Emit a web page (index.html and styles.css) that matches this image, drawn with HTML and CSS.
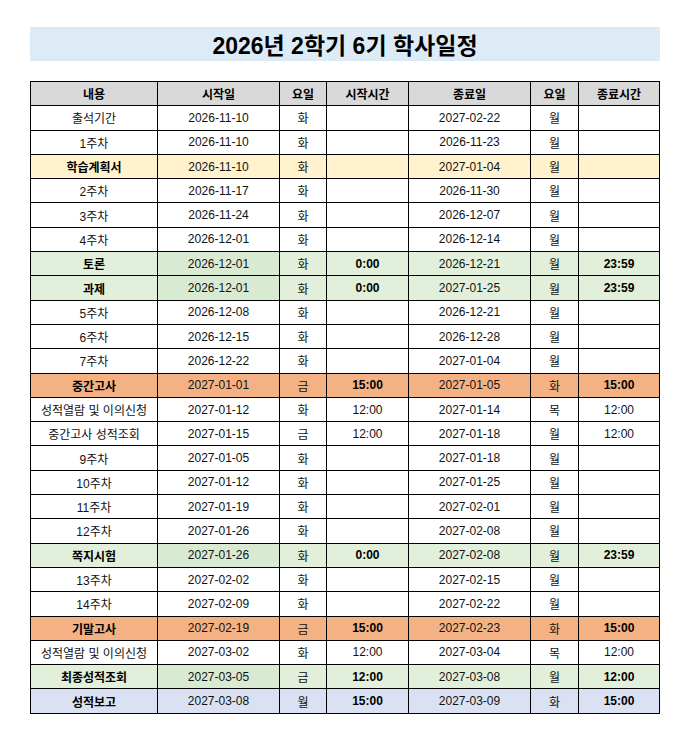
FILE: index.html
```html
<!DOCTYPE html>
<html lang="ko">
<head>
<meta charset="utf-8">
<title>2026년 2학기 6기 학사일정</title>
<link rel="stylesheet" href="styles.css">
</head>
<body>
<div class="page">
  <h1 class="title">2026년 2학기 6기 학사일정</h1>
  <div class="sheet">
    <div class="row head"><div>내용</div><div>시작일</div><div>요일</div><div>시작시간</div><div>종료일</div><div>요일</div><div>종료시간</div></div>
    <div class="row"><div>출석기간</div><div>2026-11-10</div><div>화</div><div></div><div>2027-02-22</div><div>월</div><div></div></div>
    <div class="row"><div>1주차</div><div>2026-11-10</div><div>화</div><div></div><div>2026-11-23</div><div>월</div><div></div></div>
    <div class="row yellow"><div class="b">학습계획서</div><div>2026-11-10</div><div>화</div><div></div><div>2027-01-04</div><div>월</div><div></div></div>
    <div class="row"><div>2주차</div><div>2026-11-17</div><div>화</div><div></div><div>2026-11-30</div><div>월</div><div></div></div>
    <div class="row"><div>3주차</div><div>2026-11-24</div><div>화</div><div></div><div>2026-12-07</div><div>월</div><div></div></div>
    <div class="row"><div>4주차</div><div>2026-12-01</div><div>화</div><div></div><div>2026-12-14</div><div>월</div><div></div></div>
    <div class="row green"><div class="b">토론</div><div class="dk">2026-12-01</div><div>화</div><div class="b">0:00</div><div>2026-12-21</div><div>월</div><div class="b">23:59</div></div>
    <div class="row green"><div class="b">과제</div><div class="dk">2026-12-01</div><div>화</div><div class="b">0:00</div><div>2027-01-25</div><div>월</div><div class="b">23:59</div></div>
    <div class="row"><div>5주차</div><div>2026-12-08</div><div>화</div><div></div><div>2026-12-21</div><div>월</div><div></div></div>
    <div class="row"><div>6주차</div><div>2026-12-15</div><div>화</div><div></div><div>2026-12-28</div><div>월</div><div></div></div>
    <div class="row"><div>7주차</div><div>2026-12-22</div><div>화</div><div></div><div>2027-01-04</div><div>월</div><div></div></div>
    <div class="row orange"><div class="b">중간고사</div><div>2027-01-01</div><div>금</div><div class="b">15:00</div><div>2027-01-05</div><div>화</div><div class="b">15:00</div></div>
    <div class="row"><div>성적열람 및 이의신청</div><div>2027-01-12</div><div>화</div><div>12:00</div><div>2027-01-14</div><div>목</div><div>12:00</div></div>
    <div class="row"><div>중간고사 성적조회</div><div>2027-01-15</div><div>금</div><div>12:00</div><div>2027-01-18</div><div>월</div><div>12:00</div></div>
    <div class="row"><div>9주차</div><div>2027-01-05</div><div>화</div><div></div><div>2027-01-18</div><div>월</div><div></div></div>
    <div class="row"><div>10주차</div><div>2027-01-12</div><div>화</div><div></div><div>2027-01-25</div><div>월</div><div></div></div>
    <div class="row"><div>11주차</div><div>2027-01-19</div><div>화</div><div></div><div>2027-02-01</div><div>월</div><div></div></div>
    <div class="row"><div>12주차</div><div>2027-01-26</div><div>화</div><div></div><div>2027-02-08</div><div>월</div><div></div></div>
    <div class="row green"><div class="b">쪽지시험</div><div class="dk">2027-01-26</div><div>화</div><div class="b">0:00</div><div>2027-02-08</div><div>월</div><div class="b">23:59</div></div>
    <div class="row"><div>13주차</div><div>2027-02-02</div><div>화</div><div></div><div>2027-02-15</div><div>월</div><div></div></div>
    <div class="row"><div>14주차</div><div>2027-02-09</div><div>화</div><div></div><div>2027-02-22</div><div>월</div><div></div></div>
    <div class="row orange"><div class="b">기말고사</div><div>2027-02-19</div><div>금</div><div class="b">15:00</div><div>2027-02-23</div><div>화</div><div class="b">15:00</div></div>
    <div class="row"><div>성적열람 및 이의신청</div><div>2027-03-02</div><div>화</div><div>12:00</div><div>2027-03-04</div><div>목</div><div>12:00</div></div>
    <div class="row green"><div class="b">최종성적조회</div><div class="dk">2027-03-05</div><div>금</div><div class="b">12:00</div><div>2027-03-08</div><div>월</div><div class="b">12:00</div></div>
    <div class="row blue"><div class="b">성적보고</div><div>2027-03-08</div><div>월</div><div class="b">15:00</div><div>2027-03-09</div><div>화</div><div class="b">15:00</div></div>
  </div>
</div>
</body>
</html>
```

FILE: styles.css
```css
html, body {
  margin: 0;
  padding: 0;
  background: #ffffff;
}

body {
  font-family: "Liberation Sans", Arial, "Noto Sans CJK KR", sans-serif;
  color: #000;
}

.page {
  width: 630px;
  margin-left: 30px;
  padding-top: 27px;
}

.title {
  margin: 0;
  height: 34px;
  background: #ddebf7;
  display: flex;
  align-items: center;
  justify-content: center;
  font-size: 23px;
  font-weight: bold;
  letter-spacing: 0;
}

.sheet {
  margin-top: 20px;
  display: grid;
  grid-template-columns: 126px 121px 46px 81px 121px 47px 80px;
  grid-auto-rows: 23.31px;
  gap: 1px;
  padding: 1px;
  background: #000;
  font-size: 12px;
}

.row {
  display: contents;
}

.row > div {
  background: #fff;
  display: flex;
  align-items: center;
  justify-content: center;
  white-space: nowrap;
  color: #111;
}

.row .b {
  font-weight: bold;
  color: #000;
}

.head > div {
  background: #d9d9d9;
  font-weight: bold;
  color: #000;
}

.yellow > div {
  background: #fff2cc;
}

.green > div {
  background: #e2efda;
}

.green > div.dk {
  background: #d9ead3;
}

.orange > div {
  background: #f4b183;
}

.blue > div {
  background: #d9e1f2;
}
```
